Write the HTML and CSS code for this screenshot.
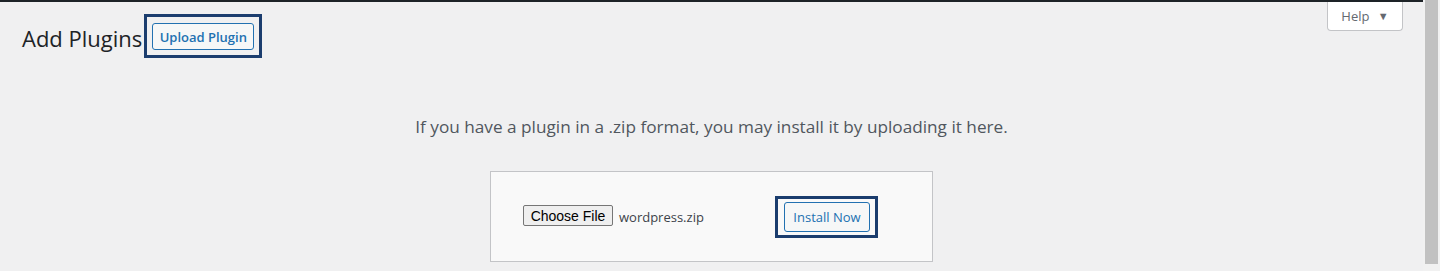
FILE: index.html
```html
<!DOCTYPE html>
<html lang="en">
<head>
    <meta charset="UTF-8">
    <meta name="viewport" content="width=device-width, initial-scale=1.0">
    <link rel="stylesheet" href="styles.css">
    <title>Add Plugins</title>
</head>
<body>
    <div class="main">
        <!-- admin bar edge -->
        <div class="topbar"></div>

        <!-- heading + help tab -->
        <div class="head">
            <div class="ttl">
                <h1 class="hed1">Add Plugins</h1>
                <span class="mark mark-up">
                    <a href="#" class="btn btn-up">Upload Plugin</a>
                </span>
            </div>
            <button class="help">Help <span class="arw">&#9660;</span></button>
        </div>

        <!-- upload form -->
        <p class="info">If you have a plugin in a .zip format, you may install it by uploading it here.</p>
        <form class="upfrm" onsubmit="return false;">
            <div class="pick">
                <button type="button" class="choose">Choose File</button>
                <span class="fname">wordpress.zip</span>
            </div>
            <span class="mark mark-in">
                <input type="submit" value="Install Now" class="btn btn-in">
            </span>
        </form>
    </div>

    <!-- page scrollbar -->
    <div class="track">
        <div class="thumb"></div>
    </div>
</body>
</html>
```

FILE: styles.css
```css
*{
    margin: 0;
    padding: 0;
    box-sizing: border-box;
}
body{
    height: 271px;
    overflow: hidden;
    display: flex;
    background-color: #f0f0f1;
    font-family: 'Open Sans', sans-serif;
    color: #3c434a;
}
.main{
    flex: 1;
}
.topbar{
    height: 2px;
    background-color: #1d2327;
}
.head{
    display: flex;
    justify-content: space-between;
    align-items: flex-start;
    padding: 0 20px 0 22px;
}
.ttl{
    display: flex;
    align-items: center;
    margin-top: 12px;
}
.hed1{
    font-size: 22px;
    font-weight: 400;
    line-height: 1.3;
    color: #1d2327;
    margin-top: 4px;
}
.mark{
    display: inline-block;
    border: 3px solid #1b3d6e;
}
.mark-up{
    margin-left: 2px;
    padding: 6px 5px 5px 5px;
}
.mark-in{
    padding: 3px 5px 3px 6px;
}
.btn{
    display: inline-flex;
    align-items: center;
    justify-content: center;
    border: 1px solid #2271b1;
    border-radius: 3px;
    background-color: #f6f7f7;
    color: #2271b1;
    font-family: 'Open Sans', sans-serif;
    font-size: 13px;
    text-decoration: none;
    cursor: pointer;
}
.btn-up{
    height: 27px;
    width: 102px;
    font-weight: 600;
}
.btn-in{
    height: 30px;
    width: 86px;
    font-weight: 400;
}
.help{
    width: 76px;
    height: 29px;
    border: 1px solid #c3c4c7;
    border-top: none;
    border-radius: 0 0 4px 4px;
    background-color: #fff;
    color: #646970;
    font-family: 'Open Sans', sans-serif;
    font-size: 13px;
    cursor: pointer;
}
.arw{
    font-size: 11px;
    margin-left: 5px;
    position: relative;
    top: -1px;
}
.info{
    text-align: center;
    font-size: 17.2px;
    color: #50575e;
    margin-top: 56px;
    line-height: 1.5;
}
.upfrm{
    width: 443px;
    margin: 31px auto 0 auto;
    padding: 24px 30px 23px 32px;
    border: 1px solid #c3c4c7;
    background-color: #f9f9f9;
    display: flex;
    align-items: center;
}
.pick{
    width: 252px;
    display: flex;
    align-items: center;
}
.choose{
    height: 21px;
    width: 90px;
    border: 1px solid #767676;
    border-radius: 2px;
    background-color: #efefef;
    color: #000;
    font-family: 'Liberation Sans', Arial, sans-serif;
    font-size: 14px;
    margin-top: -2px;
}
.fname{
    margin-left: 6px;
    font-size: 13px;
    color: #3c434a;
}
.track{
    width: 17px;
    background-color: #f1f1f1;
    padding-left: 2px;
}
.thumb{
    width: 13px;
    height: 264px;
    background-color: #c1c1c1;
}
```
